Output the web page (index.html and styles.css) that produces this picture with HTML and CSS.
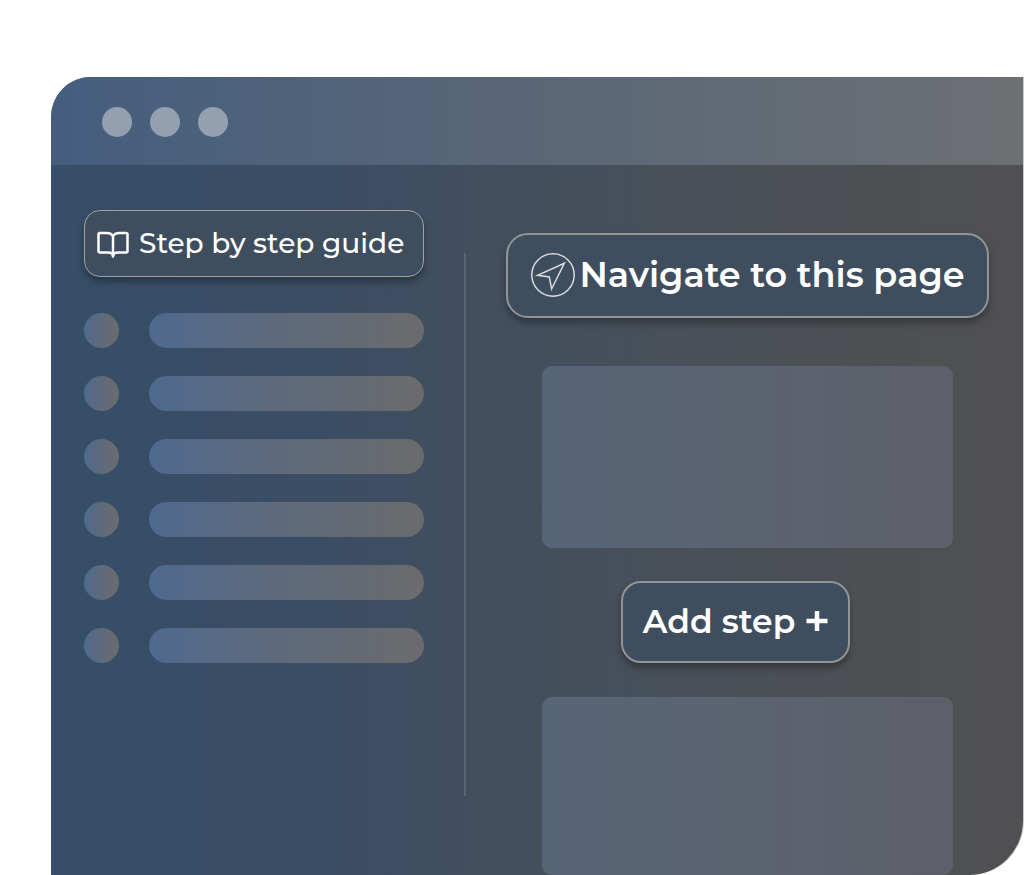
FILE: index.html
```
<!DOCTYPE html>
<html lang="en">

<head>
    <meta charset="UTF-8">
    <meta name="viewport" content="width=device-width, initial-scale=1.0">
    <link rel="stylesheet" href="styles.css">
    <title>Step by step guide</title>
</head>

<body>
    <div class="window">
        <header class="title-bar">
            <span class="dot"></span>
            <span class="dot"></span>
            <span class="dot"></span>
        </header>
        <main class="content">
            <section class="steps">
                <button type="button" class="btn btn-guide">
                    <svg class="icon-book" viewBox="0 0 32 27" aria-hidden="true">
                        <path d="M16 5.500C15 3 12.500 2 9.500 2H3C2 2 1.500 2.500 1.500 3.500V20C1.500 21 2 21.500 3 21.500H11C13.500 21.500 16 22.500 16 25.500C16 22.500 18.500 21.500 21 21.500H29C30 21.500 30.500 21 30.500 20V3.500C30.500 2.500 30 2 29 2H22.500C19.500 2 17 3 16 5.500V25" />
                    </svg>
                    Step by step guide
                </button>
                <ul class="step-list">
                    <li class="step"><span class="step-dot"></span><span class="step-bar"></span></li>
                    <li class="step"><span class="step-dot"></span><span class="step-bar"></span></li>
                    <li class="step"><span class="step-dot"></span><span class="step-bar"></span></li>
                    <li class="step"><span class="step-dot"></span><span class="step-bar"></span></li>
                    <li class="step"><span class="step-dot"></span><span class="step-bar"></span></li>
                    <li class="step"><span class="step-dot"></span><span class="step-bar"></span></li>
                </ul>
            </section>
            <div class="divider"></div>
            <section class="editor">
                <button type="button" class="btn btn-navigate">
                    <svg class="icon-navigate" viewBox="0 0 44 44" aria-hidden="true">
                        <circle cx="22" cy="22" r="21.200" />
                        <path d="M33.300 10.300L6.600 22.300L18.300 24L20.600 36Z" />
                    </svg>
                    Navigate to this page
                </button>
                <div class="card"></div>
                <button type="button" class="btn btn-add">Add step <svg class="icon-plus" viewBox="0 0 22 22" aria-hidden="true"><path d="M11 1V21M0.500 11H21.500" /></svg></button>
                <div class="card"></div>
            </section>
        </main>
    </div>
</body>

</html>
```
FILE: styles.css
```
* {
    box-sizing: border-box;
}

body {
    margin: 0;
    padding: 77px 1px 0 51px;
    background-color: #fff;
    font-family: Montserrat, Inter, sans-serif;
}

.window {
    border-radius: 40px 0 54px 0;
    overflow: hidden;
    background: linear-gradient(to right, #364e68, #3b4d64 28%, #434f5d 48%, #4a5058 68%, #4d5053 85%, #505052);
    box-shadow: 1px 0 0 #c9cacb;
}

.title-bar {
    display: flex;
    align-items: center;
    gap: 18px;
    height: 88px;
    padding: 2px 51px 0;
    background: linear-gradient(to right, #455e7e, #566578 40%, #6d7073);
}

.dot {
    width: 30px;
    height: 30px;
    border-radius: 50%;
    background-color: #94a0b0;
}

.content {
    display: grid;
    grid-template-columns: 340fr 2px 483fr;
    gap: 40px;
    padding: 0 34px 0 33px;
}

.btn {
    display: flex;
    align-items: center;
    justify-content: center;
    border: 2px solid #929495;
    background-color: #3f4e5e;
    box-shadow: 0 5px 7px rgba(0, 0, 0, 0.3);
    color: #fff;
    font-family: inherit;
    font-weight: 600;
    white-space: nowrap;
    cursor: pointer;
}

.btn svg {
    flex: none;
    fill: none;
    stroke: #fff;
}

/* Left column */
.steps {
    padding-top: 45px;
}

.btn-guide {
    justify-content: flex-start;
    width: 100%;
    height: 67px;
    gap: 10px;
    padding: 0 12px 2px;
    border-width: 1px;
    border-color: #a0a2a3;
    border-radius: 16px;
    font-size: 28px;
    font-weight: 550;
}

.icon-book {
    width: 32px;
    height: 27px;
    margin-top: 4px;
    stroke-width: 2.5;
    stroke-linejoin: round;
}

.step-list {
    display: grid;
    gap: 28px;
    margin: 36px 0 0;
    padding: 0;
    list-style: none;
}

.step {
    display: flex;
    gap: 30px;
}

.step-dot,
.step-bar {
    height: 35px;
    border-radius: 18px;
    background: linear-gradient(to right, #4e6a8e, #5c6a7e 40%, #6b6b6c);
}

.step-dot {
    width: 35px;
}

.step-bar {
    flex: 1;
}

.divider {
    margin: 88px 0 79px;
    background-color: #586575;
}

/* Right column */
.editor {
    display: flex;
    flex-direction: column;
    padding-top: 68px;
}

.btn-navigate {
    height: 85px;
    gap: 5px;
    margin-bottom: 48px;
    padding: 0 16px 2px;
    border-radius: 22px;
    font-size: 35px;
}

.icon-navigate {
    width: 44px;
    height: 44px;
    stroke-width: 1.5;
    opacity: 0.8;
}

.card {
    height: 182px;
    margin: 0 36px;
    border-radius: 10px;
    background: linear-gradient(to right, #566577, #5b6370 50%, #5d5f69);
}

.card:last-child {
    height: 178px;
}

.btn-add {
    align-self: center;
    height: 82px;
    gap: 11px;
    margin: 33px 24px 34px 0;
    padding: 0 20px 2px;
    border-radius: 20px;
    font-size: 33px;
}

.icon-plus {
    width: 22px;
    height: 22px;
    stroke-width: 4.5;
}
```
